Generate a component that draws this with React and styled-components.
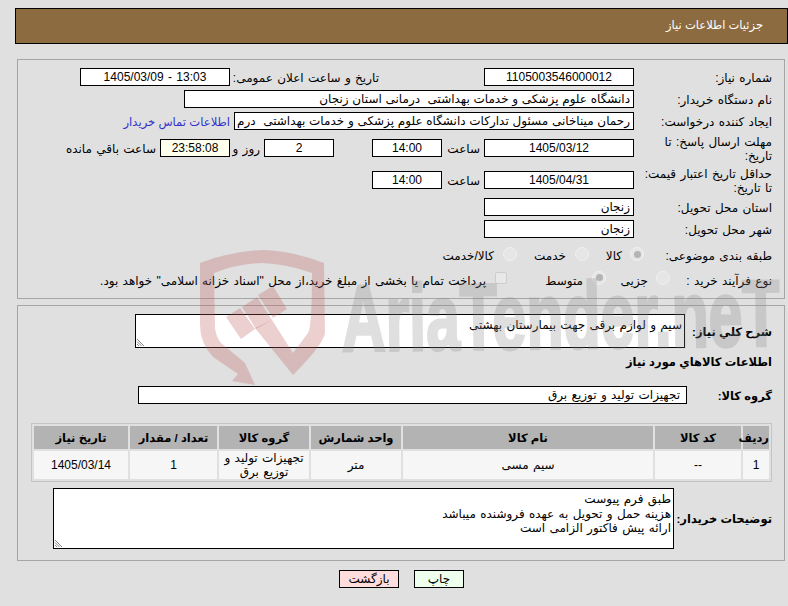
import React from "react";
import styled, { createGlobalStyle } from "styled-components";

const GlobalStyle = createGlobalStyle`
  html, body { margin: 0; padding: 0; background: #e0e0e0; }
  body {
    width: 788px;
    height: 606px;
    overflow: hidden;
    direction: rtl;
    font-family: "Liberation Sans", "DejaVu Sans", sans-serif;
    font-size: 12px;
    word-spacing: 1px;
    color: #000;
  }
`;

const Page = styled.div`
  position: relative;
  width: 773px;
  height: 606px;
  margin-left: 15px;
  padding-top: 8px;
  box-sizing: content-box;
`;

const Header = styled.div`
  height: 36px;
  box-sizing: border-box;
  background: #8c6b40;
  border: 1px solid #000;
  color: #fff;
  font-size: 11.5px;
  word-spacing: 0;
  display: flex;
  align-items: center;
  padding-right: 24px;
  padding-bottom: 2px;
`;

const Panel = styled.div`
  margin: ${(p) => p.$mt}px 3px 0 2px;
  border: 1px solid #a6a6a6;
  height: ${(p) => p.$h}px;
  box-sizing: border-box;
  padding: 8px 12px 0 0;
`;

const Row = styled.div`
  display: flex;
  align-items: center;
  height: ${(p) => p.$h || 18}px;
  margin-top: ${(p) => p.$mt || 0}px;
`;

const Label = styled.div`
  width: ${(p) => p.$w || 138}px;
  flex: none;
  box-sizing: border-box;
  padding-top: 1px;
  padding-left: ${(p) => p.$pl || 0}px;
  line-height: 14px;
  white-space: ${(p) => (p.$pl ? "normal" : "nowrap")};
`;

const BoldLabel = styled(Label)`
  font-weight: bold;
  font-size: 11.5px;
  word-spacing: 0;
`;

const Title = styled.div`
  margin-top: 6px;
  height: 16px;
  line-height: 16px;
  font-weight: bold;
  font-size: 11.5px;
  word-spacing: 0;
`;

const Field = styled.div`
  width: ${(p) => p.$w}px;
  height: 18px;
  flex: none;
  box-sizing: border-box;
  border: 1px solid #000;
  background: ${(p) => p.$bg || "#fff"};
  margin-right: ${(p) => p.$mr || 0}px;
  text-align: ${(p) => (p.$center ? "center" : "right")};
  line-height: 16px;
  padding: 0 3px;
  white-space: pre;
  overflow: hidden;
  word-spacing: ${(p) => (p.$tight ? "0.4px" : "1px")};
`;

const GroupField = styled(Field)`
  position: relative;
  z-index: 2;
  padding-right: 6px;
`;

const Inline = styled.span`
  flex: none;
  width: ${(p) => (p.$w ? `${p.$w}px` : "auto")};
  margin-right: ${(p) => p.$mr || 0}px;
  padding-top: 1px;
  white-space: nowrap;
`;

const BuyerLink = styled(Inline)`
  color: #3333cc;
  font-size: 11.6px;
  word-spacing: 0;
`;

const Radio = styled.span`
  width: 14px;
  height: 14px;
  flex: none;
  box-sizing: border-box;
  border-radius: 50%;
  border: 1px solid #f0f0f0;
  background: #e6e6e6;
  display: inline-flex;
  align-items: center;
  justify-content: center;
  margin-bottom: ${(p) => p.$mb || 0}px;
  &::after {
    content: "";
    width: 7px;
    height: 7px;
    border-radius: 50%;
    background: ${(p) => (p.$on ? "#b4b4b4" : "transparent")};
  }
`;

const Check = styled.span`
  width: 12px;
  height: 12px;
  flex: none;
  box-sizing: border-box;
  border: 1px solid #cdcdcd;
  border-radius: 2px;
  background: #e8e8e8;
  margin-bottom: 4px;
`;

const TextArea = styled.div`
  position: relative;
  width: ${(p) => p.$w}px;
  height: ${(p) => p.$h}px;
  flex: none;
  box-sizing: border-box;
  border: 1px solid #000;
  background: #fff;
  padding: ${(p) => p.$pad};
  line-height: 14.5px;
  white-space: pre-wrap;
`;

const Grip = styled.svg`
  position: absolute;
  left: 0;
  bottom: 0;
`;

const ItemsTable = styled.table`
  border-collapse: separate;
  border-spacing: 2px;
  border: 1px solid #c4c4c4;
  table-layout: fixed;
  width: 741px;
  margin-top: 19px;
  th {
    background: #b3b3b3;
    height: 23px;
    padding: 0;
    font-size: 11.5px;
    font-weight: bold;
    word-spacing: 0;
  }
  td {
    background: #f6f6f6;
    height: 28px;
    padding: 0;
    text-align: center;
    line-height: 14px;
  }
`;

const Actions = styled.div`
  display: flex;
  justify-content: center;
  direction: ltr;
  gap: 15px;
  margin-top: 9px;
`;

const Button = styled.div`
  width: ${(p) => p.$w}px;
  height: 18px;
  box-sizing: border-box;
  border: 1px solid #000;
  background: ${(p) => p.$bg};
  text-align: center;
  line-height: 16px;
`;

const Watermark = styled.svg`
  position: absolute;
  left: -15px;
  top: 0;
  pointer-events: none;
  z-index: 1;
`;

const columns = [
  ["ردیف", 26],
  ["کد کالا", 86],
  ["نام کالا", 250],
  ["واحد شمارش", 90],
  ["گروه کالا", 90],
  ["تعداد / مقدار", 87],
  ["تاریخ نیاز", 94],
];

const rows = [
  ["1", "--", "سیم مسی", "متر", "تجهیزات تولید و توزیع برق", "1", "1405/03/14"],
];

function GripIcon() {
  return (
    <Grip width="9" height="9" viewBox="0 0 9 9">
      <path d="M1 1L8 8M1 3.5L5.5 8M1 6L3 8" stroke="#666" strokeWidth="0.8" fill="none" />
    </Grip>
  );
}

function WatermarkLogo() {
  return (
    <Watermark width="788" height="606" viewBox="0 0 788 606">
      <g fill="rgb(190,93,93)" fillOpacity="0.29">
        <path d="M200 263Q231 251 262 250Q293 251 324 263L325 333Q323 345 293 375L255 328L272 320L293 353L308 333Q312 327 312 273Q287 264 262 263Q237 264 214 273L215 328Q216 337 221 343L245 363L255 385L232 381L238 374L213 357Q200 343 200 325Z" />
        <path d="M226 317L240 308L255 329L241 339Z" />
        <path d="M242 307L257 297L272 320L256 329Z" />
        <path d="M258 295L273 286L287 309L273 318Z" />
      </g>
      <g opacity="0.26">
        <text
          x="342"
          y="351"
          textLength="438"
          lengthAdjust="spacingAndGlyphs"
          direction="ltr"
          transform="rotate(-0.7 340 352)"
          fontFamily="'Liberation Sans', sans-serif"
          fontWeight="bold"
          fontSize="94"
          fill="rgb(135,135,135)"
          stroke="rgb(135,135,135)"
          strokeWidth="3"
        >
          AriaTender.neT
        </text>
      </g>
    </Watermark>
  );
}

export default function App() {
  return (
    <Page>
      <GlobalStyle />
      <Header>جزئیات اطلاعات نیاز</Header>
      <Panel $mt={15} $h={240}>
        <Row>
          <Label>شماره نیاز:</Label>
          <Field $w={150} $center>1105003546000012</Field>
          <Inline $mr={105} $w={149}>تاریخ و ساعت اعلان عمومی:</Inline>
          <Field $w={150} $center dir="ltr">1405/03/09 - 13:03</Field>
        </Row>
        <Row $mt={4}>
          <Label>نام دستگاه خریدار:</Label>
          <Field $w={450} $tight>دانشگاه علوم پزشکی و خدمات بهداشتی  درمانی استان زنجان</Field>
        </Row>
        <Row $mt={4}>
          <Label>ایجاد کننده درخواست:</Label>
          <Field $w={400} $tight>رحمان میناخانی مسئول تدارکات دانشگاه علوم پزشکی و خدمات بهداشتی  درم</Field>
          <BuyerLink $mr={4}>اطلاعات تماس خریدار</BuyerLink>
        </Row>
        <Row $mt={9}>
          <Label $pl={8}>مهلت ارسال پاسخ: تا تاریخ:</Label>
          <Field $w={150} $center>1405/03/12</Field>
          <Inline $mr={4} $w={38}>ساعت</Inline>
          <Field $w={70} $center>14:00</Field>
          <Field $w={70} $mr={38} $center>2</Field>
          <Inline $mr={4} $w={30}>روز و</Inline>
          <Field $w={70} $bg="#ffffee" $center>23:58:08</Field>
          <Inline $mr={4}>ساعت باقي مانده</Inline>
        </Row>
        <Row $mt={14}>
          <Label $pl={8}>حداقل تاریخ اعتبار قیمت: تا تاریخ:</Label>
          <Field $w={150} $center>1405/04/31</Field>
          <Inline $mr={4} $w={38}>ساعت</Inline>
          <Field $w={70} $center>14:00</Field>
        </Row>
        <Row $mt={9}>
          <Label>استان محل تحویل:</Label>
          <Field $w={150}>زنجان</Field>
        </Row>
        <Row $mt={4}>
          <Label>شهر محل تحویل:</Label>
          <Field $w={150}>زنجان</Field>
        </Row>
        <Row $mt={8}>
          <Label $w={128}>طبقه بندی موضوعی:</Label>
          <Radio $on $mb={2} />
          <Inline $mr={8} $w={33}>کالا</Inline>
          <Radio $mb={2} />
          <Inline $mr={9} $w={49}>خدمت</Inline>
          <Radio $mb={2} />
          <Inline $mr={9}>کالا/خدمت</Inline>
        </Row>
        <Row $mt={7}>
          <Label $w={102}>نوع فرآیند خرید :</Label>
          <Radio $mb={5} />
          <Inline $mr={8} $w={42}>جزیی</Inline>
          <Radio $on $mb={5} />
          <Inline $mr={9} $w={76}>متوسط</Inline>
          <Check />
          <Inline $mr={9}>پرداخت تمام یا بخشی از مبلغ خرید،از محل "اسناد خزانه اسلامی" خواهد بود.</Inline>
        </Row>
      </Panel>
      <Panel $mt={6} $h={256}>
        <Row $h={34}>
          <BoldLabel $w={87}>شرح کلي نیاز:</BoldLabel>
          <TextArea $w={550} $h={34} $pad="3px 2px">
            سیم و لوازم برقی جهت بیمارستان بهشتی
            <GripIcon />
          </TextArea>
        </Row>
        <Title>اطلاعات کالاهاي مورد نیاز</Title>
        <Row $mt={16}>
          <BoldLabel $w={85}>گروه کالا:</BoldLabel>
          <GroupField $w={549}>تجهیزات تولید و توزیع برق</GroupField>
        </Row>
        <ItemsTable>
          <colgroup>
            {columns.map(([name, width]) => (
              <col key={name} width={width} />
            ))}
          </colgroup>
          <thead>
            <tr>
              {columns.map(([name]) => (
                <th key={name}>{name}</th>
              ))}
            </tr>
          </thead>
          <tbody>
            {rows.map((row) => (
              <tr key={row[0]}>
                {row.map((cell, i) => (
                  <td key={i}>{cell}</td>
                ))}
              </tr>
            ))}
          </tbody>
        </ItemsTable>
        <Row $h={61} $mt={6}>
          <BoldLabel $w={98}>توضیحات خریدار:</BoldLabel>
          <TextArea $w={621} $h={61} $pad="3px 2px">
            {"طبق فرم پیوست\nهزینه حمل و تحویل به عهده فروشنده میباشد\nارائه پیش فاکتور الزامی است"}
            <GripIcon />
          </TextArea>
        </Row>
      </Panel>
      <Actions>
        <Button $w={60} $bg="#ffdddd">بازگشت</Button>
        <Button $w={50} $bg="#eeffee">چاپ</Button>
      </Actions>
      <WatermarkLogo />
    </Page>
  );
}
